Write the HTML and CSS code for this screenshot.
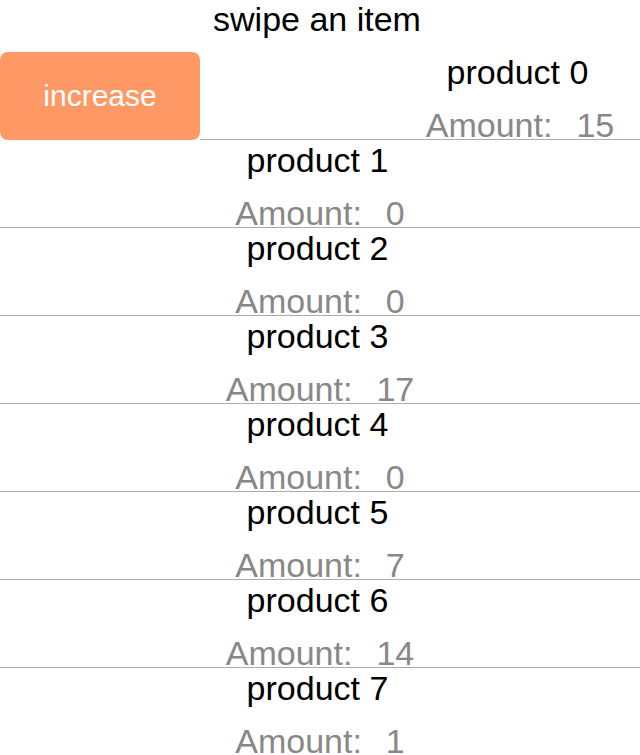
FILE: index.html
```html
<!DOCTYPE html>
<html>
<head>
<meta charset="utf-8">
<link rel="stylesheet" href="styles.css">
</head>
<body>
<div class="screen">
  <header class="title">swipe an item</header>
  <ul class="list">
    <li class="row swiped">
      <button class="action">increase</button>
      <div class="cell shifted">
        <div class="name">product 0</div>
        <div class="amount"><span>Amount:</span><span>15</span></div>
      </div>
    </li>
    <li class="row"><div class="cell"><div class="name">product 1</div><div class="amount"><span>Amount:</span><span>0</span></div></div></li>
    <li class="row"><div class="cell"><div class="name">product 2</div><div class="amount"><span>Amount:</span><span>0</span></div></div></li>
    <li class="row"><div class="cell"><div class="name">product 3</div><div class="amount"><span>Amount:</span><span>17</span></div></div></li>
    <li class="row"><div class="cell"><div class="name">product 4</div><div class="amount"><span>Amount:</span><span>0</span></div></div></li>
    <li class="row"><div class="cell"><div class="name">product 5</div><div class="amount"><span>Amount:</span><span>7</span></div></div></li>
    <li class="row"><div class="cell"><div class="name">product 6</div><div class="amount"><span>Amount:</span><span>14</span></div></div></li>
    <li class="row"><div class="cell"><div class="name">product 7</div><div class="amount"><span>Amount:</span><span>1</span></div></div></li>
  </ul>
</div>
</body>
</html>
```
FILE: styles.css
```css
html, body {
  margin: 0;
  padding: 0;
  background: #fff;
  overflow: hidden;
}
.screen {
  width: 640px;
  height: 755px;
  overflow: hidden;
  font-family: "Liberation Sans", Arial, sans-serif;
  color: #000;
}
.title {
  height: 52px;
  box-sizing: border-box;
  padding-top: 0;
  font-size: 34px;
  line-height: 38px;
  text-align: center;
  padding-right: 6px;
}
.list {
  list-style: none;
  margin: 0;
  padding: 0;
}
.row {
  position: relative;
  height: 88px;
}
.cell {
  box-sizing: border-box;
  height: 88px;
  padding-top: 1px;
  border-bottom: 1px solid #ababab;
  display: flex;
  flex-direction: column;
  align-items: center;
  padding-right: 5px;
}
.shifted {
  position: relative;
  transform: translateX(200px);
}
.name {
  font-size: 34px;
  line-height: 38px;
  flex: none;
}
.amount {
  flex: none;
  margin-top: 15px;
  font-size: 34px;
  line-height: 38px;
  color: #888;
  display: flex;
  gap: 24px;
  padding-left: 5px;
}
.action {
  position: absolute;
  left: 0;
  top: 0;
  width: 200px;
  height: 88px;
  border: none;
  border-radius: 8px;
  background: #fe9966;
  color: #fff;
  font-family: "Liberation Sans", Arial, sans-serif;
  font-size: 30px;
  line-height: 34px;
  padding: 0;
}
```
